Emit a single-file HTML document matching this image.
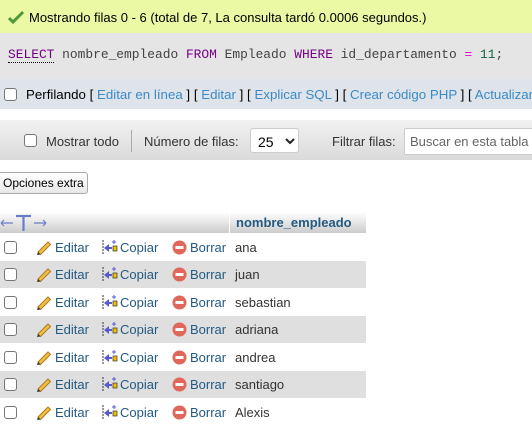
<!DOCTYPE html>
<html><head><meta charset="utf-8"><style>
*{margin:0;padding:0;box-sizing:border-box}
body{width:532px;height:431px;overflow:hidden;background:#fff;font-family:"Liberation Sans",sans-serif;font-size:13px;color:#000;position:relative}
.a{position:absolute;white-space:nowrap}
.cb{position:absolute;width:13px;height:13px;border:1px solid #767676;border-radius:3px;background:#fff}
.lnk{color:#235a81}
.row{position:absolute;left:0;width:366px;height:27.5px}
.g{background:#dfdfdf}
</style></head><body>
<div class="a" style="left:0;top:0;width:532px;height:33px;background:#ebf8a4"></div>
<svg class="a" style="left:8px;top:10px" width="16" height="14" viewBox="0 0 16 14"><path d="M1 8 L5 12 L15 2" stroke="#4a9a3a" stroke-width="3" fill="none"/></svg>
<div class="a" style="left:29px;top:10px">Mostrando filas 0 - 6 (total de 7, La consulta tardó 0.0006 segundos.)</div>
<div class="a" style="left:0;top:33px;width:532px;height:46px;background:#e5e5e5"></div>
<div class="a" style="left:8px;top:47px;font-family:'Liberation Mono',monospace;font-size:12.9px;color:#444"><span style="color:#708;border-bottom:1px dotted #000">SELECT</span> nombre_empleado <span style="color:#708">FROM</span> Empleado <span style="color:#708">WHERE</span> id_departamento <span style="color:#e0c">=</span> <span style="color:#164">11</span>;</div>
<div class="a" style="left:0;top:79px;width:532px;height:30px;background:#dee4ea"></div>
<div class="cb" style="left:4px;top:88px"></div>
<div class="a" style="left:26px;top:87px;font-size:13.3px">Perfilando <span>[</span> <span style="color:#3a8ac8">Editar en línea</span> ] [ <span style="color:#3a8ac8">Editar</span> ] [ <span style="color:#3a8ac8">Explicar SQL</span> ] [ <span style="color:#3a8ac8">Crear código PHP</span> ] [ <span style="color:#3a8ac8">Actualizar</span> ]</div>
<div class="a" style="left:0;top:120px;width:532px;height:40px;background:linear-gradient(#f2f2f2,#dadada)"></div>
<div class="cb" style="left:24px;top:134px"></div>
<div class="a" style="left:46px;top:134px;color:#333">Mostrar todo</div>
<div class="a" style="left:131px;top:130px;width:1px;height:22px;background:#aaa"></div>
<div class="a" style="left:144px;top:134px;color:#333">Número de filas:</div>
<div class="a" style="left:250px;top:128px;width:49px;height:25px;background:#fff;border:1px solid #ccc;border-radius:3px"></div>
<div class="a" style="left:258px;top:134px;font-size:14px">25</div>
<svg class="a" style="left:285px;top:138px" width="10" height="7"><path d="M1 1 L5 5 L9 1" stroke="#222" stroke-width="2" fill="none"/></svg>
<div class="a" style="left:332px;top:134px;color:#333">Filtrar filas:</div>
<div class="a" style="left:404px;top:128px;width:140px;height:27px;background:#fff;border:1px solid #ccc;border-radius:2px"></div>
<div class="a" style="left:410px;top:134px;color:#666">Buscar en esta tabla</div>
<div class="a" style="left:-2px;top:172px;width:90px;height:22px;border:1px solid #aaa;border-radius:3px;background:linear-gradient(#fff,#e8e8e8)"></div>
<div class="a" style="left:3px;top:176px;font-size:12px">Opciones extra</div>
<div class="a" style="left:0;top:212px;width:366px;height:21px;background:linear-gradient(#fff,#ccc)"></div>
<div class="a" style="left:229px;top:212px;width:1px;height:21px;background:#fff"></div>
<svg class="a" style="left:0;top:214px" width="48" height="18" viewBox="0 0 48 18"><path d="M1 9 H13 M1 9 L4 6 M1 9 L4 12 M34 9 H46 M46 9 L43 6 M46 9 L43 12" stroke="#6a7cc8" stroke-width="1.2" fill="none"/><path d="M16 2 H31 M23.5 2 V17" stroke="#6a7cc8" stroke-width="2.2"/></svg>
<div class="a" style="left:236px;top:215px;font-weight:bold;color:#235a81">nombre_empleado</div>

<div class="row" style="top:233px"></div>
<div class="row g" style="top:260.5px"></div>
<div class="row" style="top:288px"></div>
<div class="row g" style="top:315.5px"></div>
<div class="row" style="top:343px"></div>
<div class="row g" style="top:370.5px"></div>
<div class="row" style="top:398px"></div>
<div id="rows"></div>
<script>
var names=["ana","juan","sebastian","adriana","andrea","santiago","Alexis"],h="";
names.forEach(function(n,i){var y=240.5+i*27.5;
h+='<div class="cb" style="left:4px;top:'+y+'px"></div>'+
'<svg class="a" style="left:35px;top:'+(y-1)+'px" width="17" height="16" viewBox="0 0 17 16"><path d="M3 12 L13 2 L15.5 4.5 L5.5 14.5 Z" fill="#f0c040" stroke="#b07820"/><path d="M2 15 L3 12 L5.5 14.5 Z" fill="#333"/></svg>'+
'<div class="a lnk" style="left:55px;top:'+(y-1)+'px">Editar</div>'+
'<svg class="a" style="left:101px;top:'+(y-2)+'px" width="17" height="17" viewBox="0 0 17 17"><path d="M2 1 V16" stroke="#333" stroke-dasharray="2 1"/><path d="M3 9 L8 5 V13 Z" fill="#5a5ad0"/><rect x="7" y="8" width="4" height="2" fill="#5a5ad0"/><rect x="12" y="7" width="4" height="5" fill="#f2c000" stroke="#333" stroke-width=".7"/><path d="M13 1 V5 M11 3 H15" stroke="#5a5ad0"/></svg>'+
'<div class="a lnk" style="left:120px;top:'+(y-1)+'px">Copiar</div>'+
'<svg class="a" style="left:172px;top:'+(y-1)+'px" width="15" height="15"><circle cx="7.5" cy="7.5" r="7" fill="#e0685a"/><rect x="3.5" y="6" width="8" height="3" fill="#fff"/></svg>'+
'<div class="a lnk" style="left:190px;top:'+(y-1)+'px">Borrar</div>'+
'<div class="a" style="left:235px;top:'+(y-1)+'px;color:#333">'+n+'</div>';});
document.getElementById("rows").innerHTML=h;
</script>
</body></html>
